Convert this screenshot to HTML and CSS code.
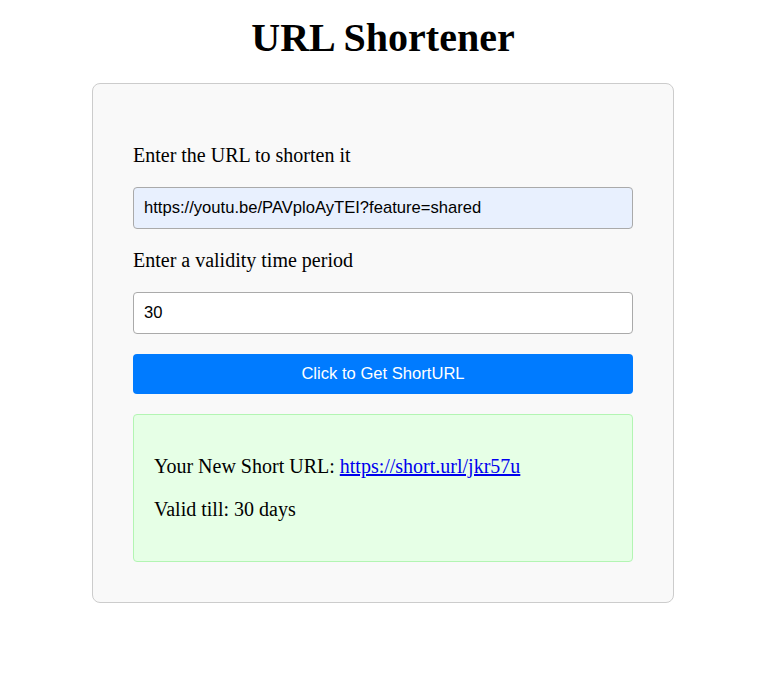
FILE: index.html
```html
<!DOCTYPE html>
<html lang="en">
<head>
<meta charset="utf-8">
<title>URL Shortener</title>
<link rel="stylesheet" href="styles.css">
</head>
<body>
<h1 class="title">URL Shortener</h1>
<div class="card">
  <label class="label" for="url">Enter the URL to shorten it</label>
  <input class="field field-filled" id="url" type="text" value="https://youtu.be/PAVploAyTEI?feature=shared">
  <label class="label" for="days">Enter a validity time period</label>
  <input class="field" id="days" type="text" value="30">
  <button class="btn" type="button">Click to Get ShortURL</button>
  <div class="result">
    <p class="result-line">Your New Short URL: <a class="result-link" href="#">https://short.url/jkr57u</a></p>
    <p class="result-line">Valid till: 30 days</p>
  </div>
</div>
</body>
</html>
```
FILE: styles.css
```css
html, body {
  background: #ffffff;
}
body {
  margin: 0 9px 0 0;
  font-family: "Liberation Serif", "Times New Roman", serif;
  color: #000;
}
.title {
  font-size: 40px;
  font-weight: bold;
  text-align: center;
  line-height: 46px;
  margin: 15px 0 22px;
}
.card {
  width: 500px;
  margin: 0 auto;
  padding: 40px;
  background: #f9f9f9;
  border: 1px solid #cccccc;
  border-radius: 8px;
}
.label {
  display: block;
  font-size: 20px;
  line-height: 23px;
  margin: 20px 0;
}
.field {
  display: block;
  box-sizing: border-box;
  width: 100%;
  height: 42px;
  padding: 0 10px;
  border: 1px solid #aaaaaa;
  border-radius: 4px;
  background: #ffffff;
  font-family: "Liberation Sans", Arial, sans-serif;
  font-size: 16.6px;
  color: #000;
  margin: 0;
}
.field-filled {
  background: #e8f0fe;
}
.btn {
  display: block;
  width: 100%;
  height: 40px;
  margin: 20px 0 0;
  border: none;
  border-radius: 4px;
  background: #007bff;
  color: #ffffff;
  font-family: "Liberation Sans", Arial, sans-serif;
  font-size: 16.6px;
}
.result {
  margin-top: 20px;
  padding: 20px;
  background: #e6ffe6;
  border: 1px solid #b3f5b3;
  border-radius: 4px;
}
.result-line {
  font-size: 20px;
  line-height: 23px;
  margin: 20px 0;
}
.result-link {
  color: #0000ee;
  text-decoration: underline;
}
```
